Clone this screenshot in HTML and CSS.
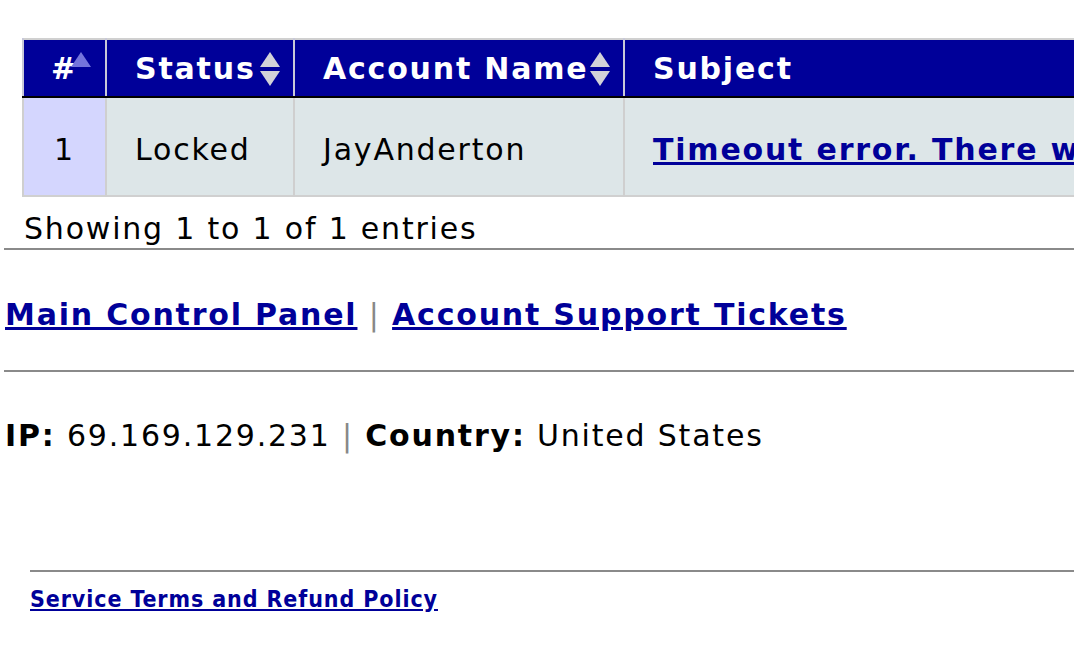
FILE: index.html
```html
<!DOCTYPE html>
<html>
<head>
<meta charset="utf-8">
<link rel="stylesheet" href="styles.css">
</head>
<body>
<div class="wrap">
  <table class="tickets">
    <colgroup>
      <col class="w-num">
      <col class="w-status">
      <col class="w-acct">
      <col class="w-subj">
    </colgroup>
    <thead>
      <tr>
        <th class="c-num sort-asc">#</th>
        <th class="sort">Status</th>
        <th class="sort">Account Name</th>
        <th>Subject</th>
      </tr>
    </thead>
    <tbody>
      <tr>
        <td class="c-num">1</td>
        <td>Locked</td>
        <td>JayAnderton</td>
        <td><a href="#">Timeout error. There was a problem connecting</a></td>
      </tr>
    </tbody>
  </table>
  <div class="info">Showing 1 to 1 of 1 entries</div>
</div>
<hr class="rule">
<p class="nav"><a href="#">Main Control Panel</a> <span class="sep">|</span> <a href="#">Account Support Tickets</a></p>
<hr class="rule">
<p class="ip"><b>IP:</b> 69.169.129.231 <span class="sep">|</span> <b>Country:</b> United States</p>
<div class="footer">
  <hr class="frule">
  <a href="#">Service Terms and Refund Policy</a>
</div>
</body>
</html>
```
FILE: styles.css
```css
html { overflow: hidden; }
body {
  margin: 0 0 0 4px;
  font-family: "DejaVu Sans", Verdana, sans-serif;
  font-size: 30px;
  letter-spacing: 1.8px;
  color: #000;
  background: #fff;
}
a { color: #000099; font-weight: bold; }
.wrap { padding: 38px 0 0 18px; }
.tickets {
  border-collapse: collapse;
  border: 2px solid #d0d0d0;
  white-space: nowrap;
  table-layout: fixed;
  width: 1700px;
}
.w-num { width: 83px; }
.w-status { width: 188px; }
.w-acct { width: 330px; }
.tickets th {
  background: #000099;
  color: #fff;
  font-weight: bold;
  text-align: left;
  height: 58px;
  padding: 1px 28px 0;
  border-left: 2px solid #c8c8d8;
  border-bottom: 2px solid #000;
  box-sizing: border-box;
  position: relative;
  overflow: visible;
}
.tickets td {
  background: #dde6e8;
  height: 99px;
  padding: 5px 28px 0;
  border-left: 2px solid #cfcfcf;
  box-sizing: border-box;
  overflow: hidden;
}
.tickets .c-num { text-align: center; padding-left: 0; padding-right: 0; }
.tickets td.c-num { background: #d4d6fe; }
.sort::after, .sort::before, .sort-asc::before {
  content: "";
  position: absolute;
  right: 13px;
  border-left: 10px solid transparent;
  border-right: 10px solid transparent;
}
.sort::before, .sort-asc::before {
  top: 12px;
  border-bottom: 15px solid #d2d2d8;
}
.sort::after {
  top: 31px;
  border-top: 15px solid #d2d2d8;
}
.sort-asc::before {
  right: 14px;
  border-bottom-color: #7474dc;
}
.info { padding: 14px 0 0 2px; height: 37px; }
.rule {
  margin: 0;
  border: 0;
  border-top: 2px solid #8a8a8a;
  height: 0;
}
.nav { margin: 0; padding: 47px 0 0 1px; height: 73px; }
.sep { color: #888; }
.ip { margin: 0; padding: 46px 0 0 1px; height: 152px; }
.footer { padding-left: 26px; }
.frule {
  margin: 0;
  border: 0;
  border-top: 2px solid #8a8a8a;
  height: 0;
}
.footer a {
  display: inline-block;
  margin-top: 14px;
  font-family: "DejaVu Sans Condensed", Tahoma, sans-serif;
  font-size: 23px;
  letter-spacing: 0.9px;
}
```
